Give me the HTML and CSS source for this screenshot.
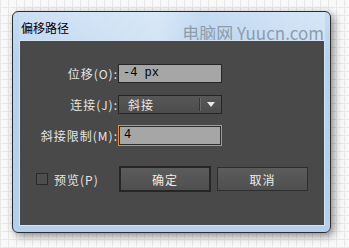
FILE: index.html
```html
<!DOCTYPE html>
<html lang="zh-CN">
<head>
    <meta charset="UTF-8">
    <title>偏移路径</title>
    <link rel="stylesheet" href="styles.css">
</head>
<body>
    <div class="dialog">
        <div class="title-bar">
            <span class="title">偏移路径</span>
            <span class="watermark">电脑网 Yuucn.com</span>
        </div>
        <div class="panel">
            <div class="row">
                <label class="label">位移(O):</label>
                <div class="field">-4 px</div>
            </div>
            <div class="row">
                <label class="label">连接(J):</label>
                <div class="select">
                    <span class="select-text">斜接</span>
                    <span class="select-sep"></span>
                    <span class="select-arrow"></span>
                </div>
            </div>
            <div class="row">
                <label class="label">斜接限制(M):</label>
                <div class="field focused">4</div>
            </div>
            <div class="actions">
                <div class="check">
                    <span class="check-box"></span>
                    <span class="check-text">预览(P)</span>
                </div>
                <button class="btn btn-default">确定</button>
                <button class="btn">取消</button>
            </div>
        </div>
    </div>
</body>
</html>
```

FILE: styles.css
```css
* {
    margin: 0;
    padding: 0;
    box-sizing: border-box;
}
body {
    width: 349px;
    height: 248px;
    overflow: hidden;
    font-family: "Noto Sans CJK SC", sans-serif;
    font-size: 12px;
    background-color: #f9f9f9;
    background-image:
        linear-gradient(90deg, #e8e8e8 1px, transparent 1px),
        linear-gradient(0deg, #e8e8e8 1px, transparent 1px);
    background-size: 8px 8px;
    padding: 11px 0 0 12px;
}
.dialog {
    width: 319px;
    height: 222px;
    border: 1px solid #2c2c2c;
    border-radius: 6px;
    background: linear-gradient(180deg, #c6dcf3 0%, #b8d3f0 20%, #b3cfee 100%);
    padding: 0 5px 6px 6px;
    box-shadow: 3px 3px 8px rgba(0, 0, 0, 0.45);
    display: flex;
    flex-direction: column;
}
.title-bar {
    height: 28px;
    display: flex;
    align-items: center;
    justify-content: space-between;
    padding: 3px 0 0 2px;
    background: linear-gradient(90deg, rgba(255,255,255,0.1) 0%, rgba(255,255,255,0.35) 45%, rgba(255,255,255,0) 60%, rgba(255,255,255,0.3) 100%);
}
.title {
    color: #000;
    font-size: 12px;
}
.watermark {
    color: #8f9cab;
    font-size: 17px;
    margin: 9px 1px 0 0;
    font-family: "Noto Sans CJK SC", sans-serif;
}
.panel {
    flex: 1;
    background: #494949;
    border: 1px solid #d5e4f4;
    padding-top: 23px;
    display: flex;
    flex-direction: column;
    gap: 12px;
    color: #e4e4e4;
}
.row {
    display: flex;
    align-items: center;
    height: 19px;
}
.label {
    width: 98px;
    text-align: right;
    letter-spacing: 1px;
}
.field {
    width: 104px;
    height: 19px;
    background: #a6a6a6;
    border: 1px solid #262626;
    color: #000;
    font-family: "Liberation Mono", monospace;
    font-size: 12px;
    line-height: 17px;
    padding-left: 4px;
}
.field.focused {
    height: 21px;
    border: 1px solid #ec8d21;
    box-shadow: inset 0 0 0 1px #2e2e2e;
    line-height: 19px;
    padding-left: 5px;
}
.select {
    width: 104px;
    height: 19px;
    border: 1px solid #262626;
    background: linear-gradient(180deg, #575757 0%, #4c4c4c 100%);
    display: flex;
    align-items: center;
}
.select-text {
    flex: 1;
    padding-left: 9px;
    color: #e8e8e8;
    letter-spacing: 1px;
}
.select-sep {
    width: 2px;
    height: 13px;
    border-left: 1px solid #333;
    border-right: 1px solid #6a6a6a;
}
.select-arrow {
    width: 20px;
    display: flex;
    justify-content: center;
}
.select-arrow::after {
    content: "";
    border-left: 4px solid transparent;
    border-right: 4px solid transparent;
    border-top: 5px solid #e8e8e8;
}
.actions {
    display: flex;
    align-items: center;
    margin-top: 9px;
    padding-left: 16px;
    height: 26px;
}
.check {
    display: flex;
    align-items: center;
    width: 83px;
}
.check-box {
    width: 12px;
    height: 12px;
    border: 1px solid #2a2a2a;
    background: #4e4e4e;
    margin-right: 6px;
}
.check-text {
    letter-spacing: 1px;
}
.btn {
    width: 91px;
    height: 24px;
    border: 1px solid #2e2e2e;
    background: linear-gradient(180deg, #5c5c5c 0%, #4f4f4f 100%);
    color: #ececec;
    font-family: "Noto Sans CJK SC", sans-serif;
    font-size: 12px;
    letter-spacing: 1px;
    margin-right: 6px;
}
.btn-default {
    height: 26px;
    border: 2px solid #262626;
    width: 92px;
}
```
